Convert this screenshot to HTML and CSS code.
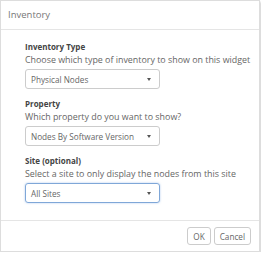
FILE: index.html
```html
<!DOCTYPE html>
<html lang="en">
<head>
    <meta charset="UTF-8">
    <title>Inventory</title>
    <link rel="stylesheet" href="styles.css">
</head>
<body>
    <div class="dialog">
        <div class="dialog-header">Inventory</div>
        <div class="dialog-body">
            <div class="field">
                <div class="field-title">Inventory Type</div>
                <div class="field-desc">Choose which type of inventory to show on this widget</div>
                <div class="select"><span>Physical Nodes</span><i class="caret"></i></div>
            </div>
            <div class="field">
                <div class="field-title">Property</div>
                <div class="field-desc">Which property do you want to show?</div>
                <div class="select"><span>Nodes By Software Version</span><i class="caret"></i></div>
            </div>
            <div class="field">
                <div class="field-title">Site (optional)</div>
                <div class="field-desc">Select a site to only display the nodes from this site</div>
                <div class="select focused"><span>All Sites</span><i class="caret"></i></div>
            </div>
        </div>
        <div class="dialog-footer">
            <button class="btn">OK</button>
            <button class="btn">Cancel</button>
        </div>
    </div>
</body>
</html>
```

FILE: styles.css
```css
body {
    margin: 0;
    font-family: "Open Sans", "Noto Sans", sans-serif;
    background: #fff;
}

.dialog {
    width: 258px;
    height: 250px;
    border: 1px solid #ddd;
    box-shadow: 1px 2px 2px rgba(0, 0, 0, 0.2);
    display: flex;
    flex-direction: column;
    background: #fff;
}

.dialog-header {
    height: 28px;
    line-height: 28px;
    padding-left: 7px;
    font-size: 9.5px;
    color: #777;
    border-bottom: 1px solid #e5e5e5;
}

.dialog-body {
    flex: 1;
    padding: 10px 0 0 24px;
}

.field { margin-bottom: 8px; }

.field-title {
    font-size: 8px;
    font-weight: 700;
    color: #444;
    line-height: 13px;
}

.field-desc {
    font-size: 8.9px;
    color: #666;
    line-height: 13px;
    margin-bottom: 3px;
    white-space: nowrap;
}

.select {
    height: 18px;
    border: 1px solid #ccc;
    border-radius: 3px;
    display: flex;
    align-items: center;
    justify-content: space-between;
    padding: 0 8px 0 5px;
    width: 120px;
    font-size: 8.2px;
    color: #666;
}

.select.focused {
    border-color: #7fa7d8;
    box-shadow: 0 0 2px rgba(80, 140, 220, 0.5);
}

.caret {
    width: 0;
    height: 0;
    border-left: 2.5px solid transparent;
    border-right: 2.5px solid transparent;
    border-top: 3px solid #555;
}

.dialog-footer {
    border-top: 1px solid #e5e5e5;
    height: 30px;
    display: flex;
    justify-content: flex-end;
    align-items: center;
    gap: 3px;
    padding-right: 8px;
}

.btn {
    font-family: "Open Sans", "Noto Sans", sans-serif;
    font-size: 8.2px;
    color: #666;
    background: #fff;
    border: 1px solid #ccc;
    border-radius: 3px;
    height: 18px;
    padding: 0 5px;
}
```
